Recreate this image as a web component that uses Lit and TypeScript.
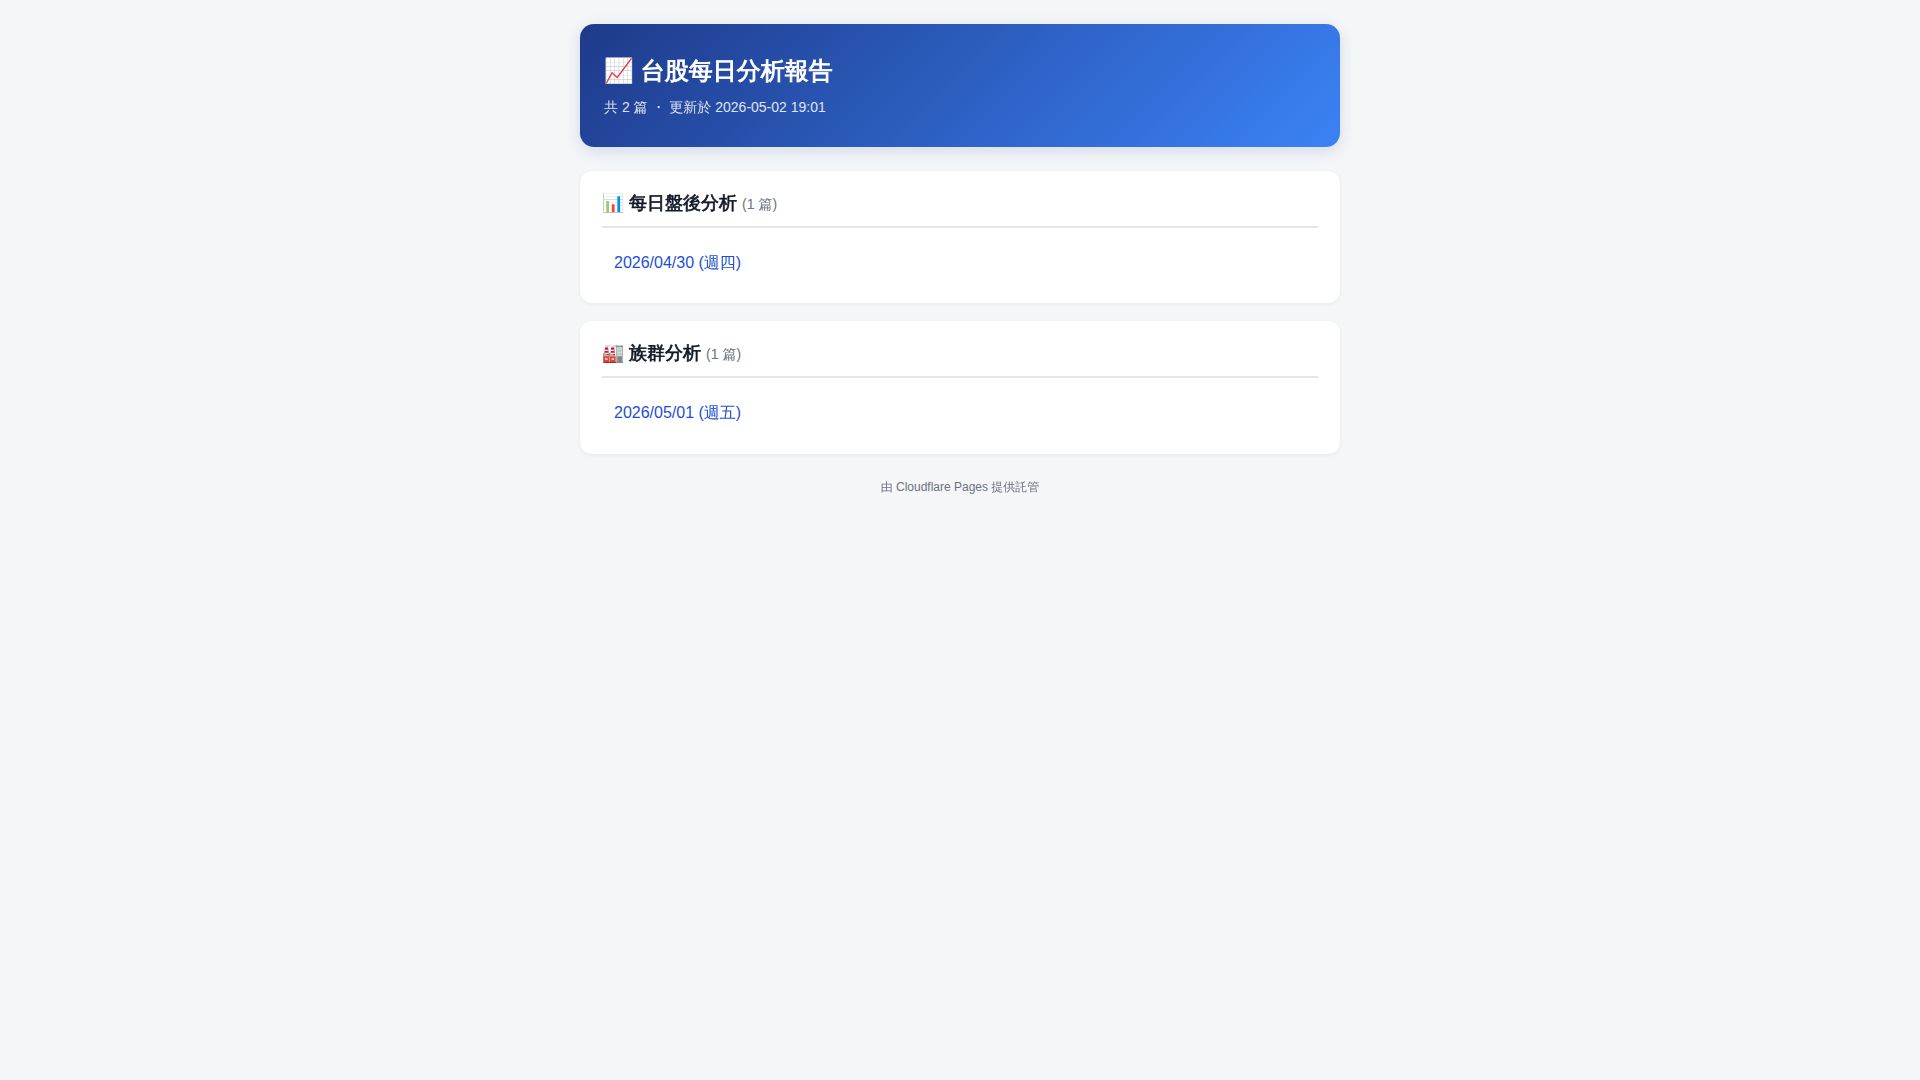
import { LitElement, html, css } from "lit";
import { customElement, property } from "lit/decorators.js";

@customElement("report-section")
class ReportSection extends LitElement {
  @property() icon = "";
  @property() heading = "";
  @property({ attribute: false }) items: string[] = [];

  static styles = css`
    :host { display: block; }
    .card { background: #fff; border-radius: 12px; padding: 18px 22px; margin-bottom: 18px; box-shadow: 0 1px 4px rgba(0, 0, 0, 0.06); }
    .title { margin: 0 0 12px; padding-bottom: 8px; border-bottom: 2px solid #e5e7eb; font-size: 18px; color: #111827; -webkit-text-stroke: 0.038em; }
    .count { font-size: 14px; font-weight: 400; color: #6b7280; -webkit-text-stroke: 0; }
    .list { list-style: none; margin: 0; padding: 0; }
    .link { display: block; padding: 10px 12px; color: #1d4ed8; text-decoration: none; border-radius: 8px; }
  `;

  render() {
    return html`<section class="card">
      <h2 class="title">${this.icon} ${this.heading} <span class="count">(${this.items.length} 篇)</span></h2>
      <ul class="list">${this.items.map((t) => html`<li><a class="link" href="#">${t}</a></li>`)}</ul>
    </section>`;
  }
}

@customElement("app-root")
class AppRoot extends LitElement {
  static styles = css`
    :host { display: block; min-height: 100vh; box-sizing: border-box; background: #f4f6f8; color: #1f2937; font-family: "Liberation Sans", "WenQuanYi Zen Hei", "Noto Sans CJK TC", sans-serif; line-height: 1.6; padding: 24px 0; }
    .wrap { width: 760px; margin: 0 auto; }
    .hero { background: linear-gradient(135deg, #1e3a8a, #3b82f6); color: #fff; padding: 28px 24px; border-radius: 14px; margin-bottom: 24px; box-shadow: 0 4px 16px rgba(30, 58, 138, 0.15); }
    .name { margin: 0 0 6px; font-size: 24px; -webkit-text-stroke: 0.037em; }
    .meta { font-size: 14px; opacity: 0.85; }
    .foot { text-align: center; font-size: 12px; color: #6b7280; margin-top: 24px; }
  `;

  render() {
    return html`<main class="wrap">
      <header class="hero">
        <h1 class="name">📈 台股每日分析報告</h1>
        <div class="meta">共 2 篇 ・ 更新於 2026-05-02 19:01</div>
      </header>
      <report-section icon="📊" heading="每日盤後分析" .items=${["2026/04/30 (週四)"]}></report-section>
      <report-section icon="🏭" heading="族群分析" .items=${["2026/05/01 (週五)"]}></report-section>
      <footer class="foot">由 Cloudflare Pages 提供託管</footer>
    </main>`;
  }
}
